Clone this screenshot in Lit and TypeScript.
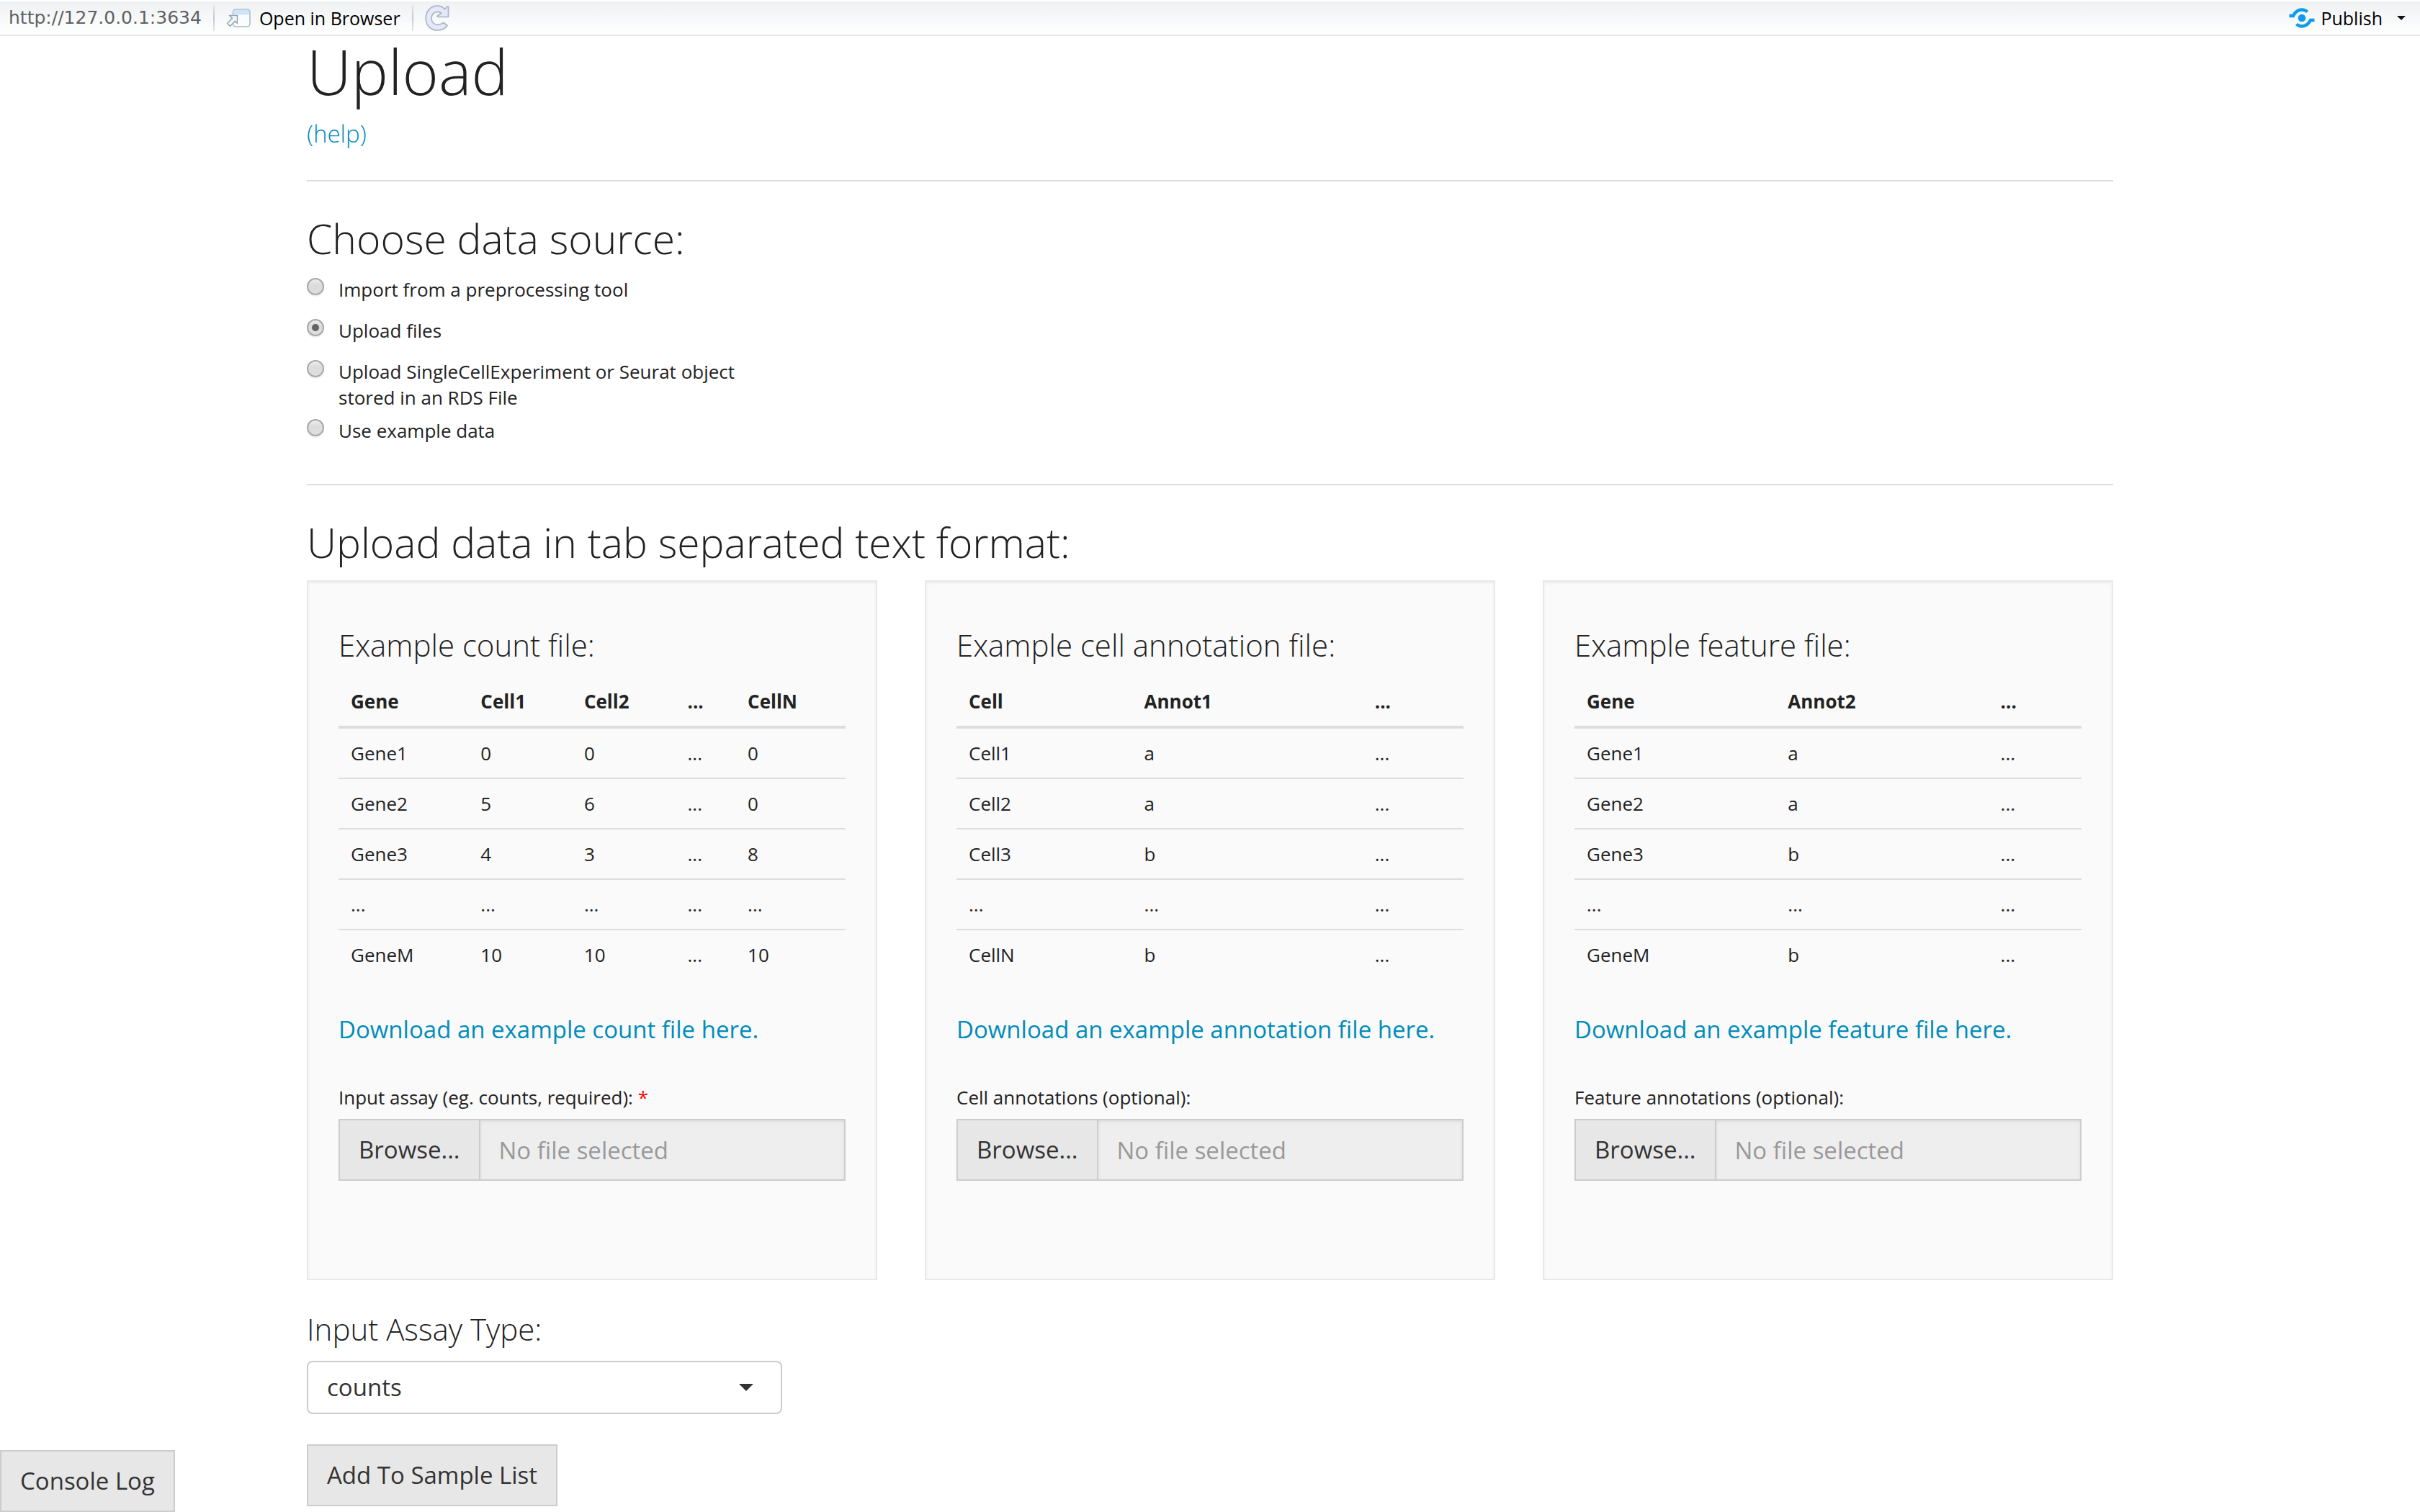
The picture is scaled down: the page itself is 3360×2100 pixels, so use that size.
import { LitElement, html, css, svg } from "lit";
import { customElement, property, state } from "lit/decorators.js";

interface UploadSpec {
  id: string;
  title: string;
  head: string[];
  rows: string[][];
  link: string;
  label: string;
  required: boolean;
}

const UPLOADS: UploadSpec[] = [
  {
    id: "counts",
    title: "Example count file:",
    head: ["Gene", "Cell1", "Cell2", "...", "CellN"],
    rows: [
      ["Gene1", "0", "0", "...", "0"],
      ["Gene2", "5", "6", "...", "0"],
      ["Gene3", "4", "3", "...", "8"],
      ["...", "...", "...", "...", "..."],
      ["GeneM", "10", "10", "...", "10"],
    ],
    link: "Download an example count file here.",
    label: "Input assay (eg. counts, required):",
    required: true,
  },
  {
    id: "annotations",
    title: "Example cell annotation file:",
    head: ["Cell", "Annot1", "..."],
    rows: [
      ["Cell1", "a", "..."],
      ["Cell2", "a", "..."],
      ["Cell3", "b", "..."],
      ["...", "...", "..."],
      ["CellN", "b", "..."],
    ],
    link: "Download an example annotation file here.",
    label: "Cell annotations (optional):",
    required: false,
  },
  {
    id: "features",
    title: "Example feature file:",
    head: ["Gene", "Annot2", "..."],
    rows: [
      ["Gene1", "a", "..."],
      ["Gene2", "a", "..."],
      ["Gene3", "b", "..."],
      ["...", "...", "..."],
      ["GeneM", "b", "..."],
    ],
    link: "Download an example feature file here.",
    label: "Feature annotations (optional):",
    required: false,
  },
];

const SOURCES = [
  "Import from a preprocessing tool",
  "Upload files",
  "Upload SingleCellExperiment or Seurat object stored in an RDS File",
  "Use example data",
];

const shared = css`
  * {
    box-sizing: border-box;
  }
  h1,
  h2,
  h3,
  p {
    margin: 0;
  }
  h1,
  h2,
  h3 {
    font-weight: 300;
  }
  h3 {
    font-size: 42px;
    line-height: 44px;
  }
  a {
    color: #008cba;
    text-decoration: none;
  }
  button,
  input,
  select {
    font: inherit;
    margin: 0;
    border-radius: 0;
  }
  .btn {
    height: 86px;
    padding: 0 26px;
    border: 2px solid #cccccc;
    background: #e7e7e7;
    color: #333333;
    white-space: nowrap;
    cursor: pointer;
  }
`;

@customElement("viewer-toolbar")
export class ViewerToolbar extends LitElement {
  static styles = [
    shared,
    css`
      :host {
        display: block;
      }
      .bar {
        display: flex;
        align-items: center;
        height: 50px;
        padding: 0 20px 0 12px;
        border-top: 2px solid #ffffff;
        border-bottom: 2px solid #e6e7ec;
        background: linear-gradient(#eef1f3, #ffffff);
        font-size: 25px;
        line-height: 36px;
        color: #000000;
      }
      .url {
        font-family: "DejaVu Sans", sans-serif;
        color: #5f6163;
      }
      .sep {
        width: 2px;
        height: 36px;
        margin-left: 16px;
        background: linear-gradient(#e4e7e9, #c4c8ca, #e4e7e9);
      }
      .tool {
        display: flex;
        align-items: center;
        gap: 12px;
        margin-left: 16px;
        padding: 0;
        border: 0;
        background: none;
        color: inherit;
        font-weight: 500;
      }
      .publish {
        margin-left: auto;
        gap: 8px;
      }
      .caret {
        margin-left: 12px;
      }
    `,
  ];

  render() {
    return html`
      <div class="bar">
        <span class="url">http://127.0.0.1:3634</span>
        <span class="sep"></span>
        <button class="tool" type="button">
          <svg width="34" height="26" viewBox="0 0 34 26" aria-hidden="true">
            <rect x="9.5" y="1" width="23.5" height="24" rx="4" fill="#fbfcfe" stroke="#a9bccd" stroke-width="1.6" />
            <path d="M10.3 8.5V5a3.2 3.2 0 0 1 3.2-3.2H29A3.2 3.2 0 0 1 32.200 5v3.500z" fill="#cfe4fa" />
            <path
              d="M4.500 9.500H15.500V20.500L12.300 17.300L5.500 24.500L1.500 20.500L8.400 13.400z"
              fill="#f3f6f9"
              stroke="#97a3af"
              stroke-width="1.500"
              stroke-linejoin="round"
            />
          </svg>
          <span>Open in Browser</span>
        </button>
        <span class="sep"></span>
        <button class="tool" type="button" aria-label="Refresh">
          <svg width="34" height="36" viewBox="0 0 34 36" aria-hidden="true">
            <path
              d="M32.500 2V16.500H17.500V15L22.800 11.200C21 9.900 19.300 9.400 17.500 9.400C12.500 9.400 9 13 9 18.300C9 23.600 12.500 27.300 17.300 27.300C20.800 27.300 23.500 26.200 26 24.500L31 28.500C28 32.800 23 35 17.300 35C8 35 1.200 28 1.200 18.300C1.200 8.500 8 1.200 17.300 1.200C21.500 1.200 25 2.800 27.600 5.800L31 2z"
              fill="#e3e9f8"
              stroke="#adb4c6"
              stroke-width="1.700"
              stroke-linejoin="round"
            />
          </svg>
        </button>
        <button class="tool publish" type="button">
          <svg width="36" height="28" viewBox="0 0 36 28" aria-hidden="true">
            <circle cx="18" cy="14" r="5.300" fill="#0d9bea" />
            <g fill="none" stroke="#0d9bea" stroke-width="4.400">
              <path d="M0.500 11H6C8.500 6 12 2.500 18 2.500C21.500 2.500 23.500 3.600 25.500 5.500" />
              <path d="M35.500 17H30C27.500 22 24 25.500 18 25.500C14.500 25.500 12.500 24.400 10.500 22.500" />
            </g>
          </svg>
          <span>Publish</span>
          <svg class="caret" width="12" height="6" viewBox="0 0 12 6" aria-hidden="true">
            <path d="M0 0H12L6 6z" fill="#111111" />
          </svg>
        </button>
      </div>
    `;
  }
}

@customElement("upload-panel")
export class UploadPanel extends LitElement {
  @property({ attribute: false }) spec!: UploadSpec;
  @state() private fileName = "";

  static styles = [
    shared,
    css`
      :host {
        display: block;
        min-width: 0;
      }
      .well {
        height: 100%;
        padding: 66px 42px 136px;
        border: 2px solid #e8e8e8;
        background: #fafafa;
        box-shadow: inset 0 2px 4px rgba(0, 0, 0, 0.05);
      }
      .table {
        width: 100%;
        margin-top: 22px;
        border-collapse: separate;
        border-spacing: 0;
        font-size: 26px;
        line-height: 36px;
        text-align: left;
      }
      th,
      td {
        padding: 16px 17px;
      }
      th {
        font-weight: 700;
        border-bottom: 4px solid #dddddd;
      }
      .row + .row td {
        border-top: 2px solid #dddddd;
      }
      .download {
        margin-top: 48px;
        line-height: 44px;
      }
      .label {
        display: block;
        margin-top: 54px;
        font-size: 26px;
        line-height: 36px;
      }
      .star {
        color: #ff0000;
      }
      .group {
        display: flex;
        margin-top: 12px;
      }
      .name {
        flex: 1;
        min-width: 0;
        height: 86px;
        padding: 0 26px;
        border: 2px solid #cccccc;
        border-left: 0;
        background: #eeeeee;
        box-shadow: inset 0 2px 4px rgba(0, 0, 0, 0.075);
        color: #6f6f6f;
        outline: none;
      }
      .name::placeholder {
        color: #999999;
        opacity: 1;
      }
      .file {
        display: none;
      }
    `,
  ];

  private browse() {
    this.renderRoot.querySelector<HTMLInputElement>(".file")?.click();
  }

  private picked(e: Event) {
    this.fileName = (e.target as HTMLInputElement).files?.[0]?.name ?? "";
  }

  render() {
    const s = this.spec;
    return html`
      <section class="well">
        <h3>${s.title}</h3>
        <table class="table">
          <thead>
            <tr>
              ${s.head.map((h) => html`<th scope="col">${h}</th>`)}
            </tr>
          </thead>
          <tbody>
            ${s.rows.map(
              (r) => html`<tr class="row">
                ${r.map((c) => html`<td>${c}</td>`)}
              </tr>`
            )}
          </tbody>
        </table>
        <p class="download"><a href="#${s.id}">${s.link}</a></p>
        <label class="label" for="name"
          >${s.label} ${s.required ? html`<span class="star">*</span>` : ""}</label
        >
        <div class="group">
          <button class="btn" type="button" @click=${this.browse}>Browse...</button>
          <input class="name" id="name" type="text" readonly placeholder="No file selected" .value=${this.fileName} />
          <input class="file" type="file" aria-label=${s.label} @change=${this.picked} />
        </div>
      </section>
    `;
  }
}

@customElement("app-root")
export class AppRoot extends LitElement {
  @state() private source = 1;

  static styles = [
    shared,
    css`
      :host {
        display: block;
        min-height: 100vh;
        background: #ffffff;
        color: #222222;
        font-family: "Open Sans", sans-serif;
        font-size: 33px;
        line-height: 44px;
      }
      .page {
        max-width: 2568px;
        margin: 0 auto;
        padding: 2px 30px 0;
      }
      h1 {
        font-size: 86px;
        line-height: 94px;
      }
      h2 {
        margin-bottom: 22px;
        font-size: 57px;
        line-height: 62px;
      }
      .help {
        margin-top: 18px;
        font-weight: 300;
      }
      .rule {
        height: 2px;
        margin: 42px 0 48px;
        border: 0;
        background: #dddddd;
      }
      .sources {
        display: grid;
        gap: 10px;
        max-width: 630px;
        margin: 0;
        padding: 0 0 3px;
        border: 0;
        font-size: 26px;
        line-height: 36px;
      }
      .source {
        display: flex;
        align-items: flex-start;
        gap: 20px;
        min-height: 47px;
      }
      .radio {
        flex: none;
        appearance: none;
        display: grid;
        place-items: center;
        width: 24px;
        height: 24px;
        margin-top: 2px;
        border: 2px solid #a8a8a8;
        border-radius: 50%;
        background: linear-gradient(#ededed, #dcdcdc 40%, #dedede);
        box-shadow: 0 2px 1px rgba(0, 0, 0, 0.06);
      }
      .radio:checked::before {
        content: "";
        width: 10px;
        height: 10px;
        border-radius: 50%;
        background: #646464;
      }
      .panels {
        display: grid;
        grid-template-columns: repeat(3, minmax(0, 1fr));
        gap: 66px;
      }
      .assay {
        display: block;
        margin: 46px 0 22px;
        font-size: 42px;
        line-height: 44px;
        font-weight: 300;
      }
      .pick {
        display: grid;
        align-items: center;
        max-width: 660px;
        margin-bottom: 42px;
      }
      .select,
      .arrow {
        grid-area: 1 / 1;
      }
      .select {
        appearance: none;
        width: 100%;
        height: 74px;
        padding: 0 26px;
        border: 2px solid #cccccc;
        border-radius: 8px;
        background: #ffffff;
        color: #333333;
      }
      .arrow {
        justify-self: end;
        margin-right: 40px;
        pointer-events: none;
      }
      .console {
        position: fixed;
        left: 0;
        bottom: 0;
      }
    `,
  ];

  render() {
    return html`
      <viewer-toolbar></viewer-toolbar>
      <main class="page">
        <h1>Upload</h1>
        <p class="help"><a href="#help">(help)</a></p>
        <hr class="rule" />
        <h2 id="source-title">Choose data source:</h2>
        <fieldset class="sources" aria-labelledby="source-title">
          ${SOURCES.map(
            (s, i) => html`<label class="source">
              <input
                class="radio"
                type="radio"
                name="source"
                .checked=${this.source === i}
                @change=${() => (this.source = i)}
              />
              <span>${s}</span>
            </label>`
          )}
        </fieldset>
        <hr class="rule" />
        <h2>Upload data in tab separated text format:</h2>
        <div class="panels">
          ${UPLOADS.map((u) => html`<upload-panel .spec=${u}></upload-panel>`)}
        </div>
        <label class="assay" for="assay">Input Assay Type:</label>
        <div class="pick">
          <select class="select" id="assay">
            <option>counts</option>
          </select>
          <svg class="arrow" width="20" height="10" viewBox="0 0 20 10" aria-hidden="true">
            ${svg`<path d="M0 0H20L10 10z" fill="#333333" />`}
          </svg>
        </div>
        <button class="btn" type="button">Add To Sample List</button>
      </main>
      <button class="btn console" type="button">Console Log</button>
    `;
  }
}
